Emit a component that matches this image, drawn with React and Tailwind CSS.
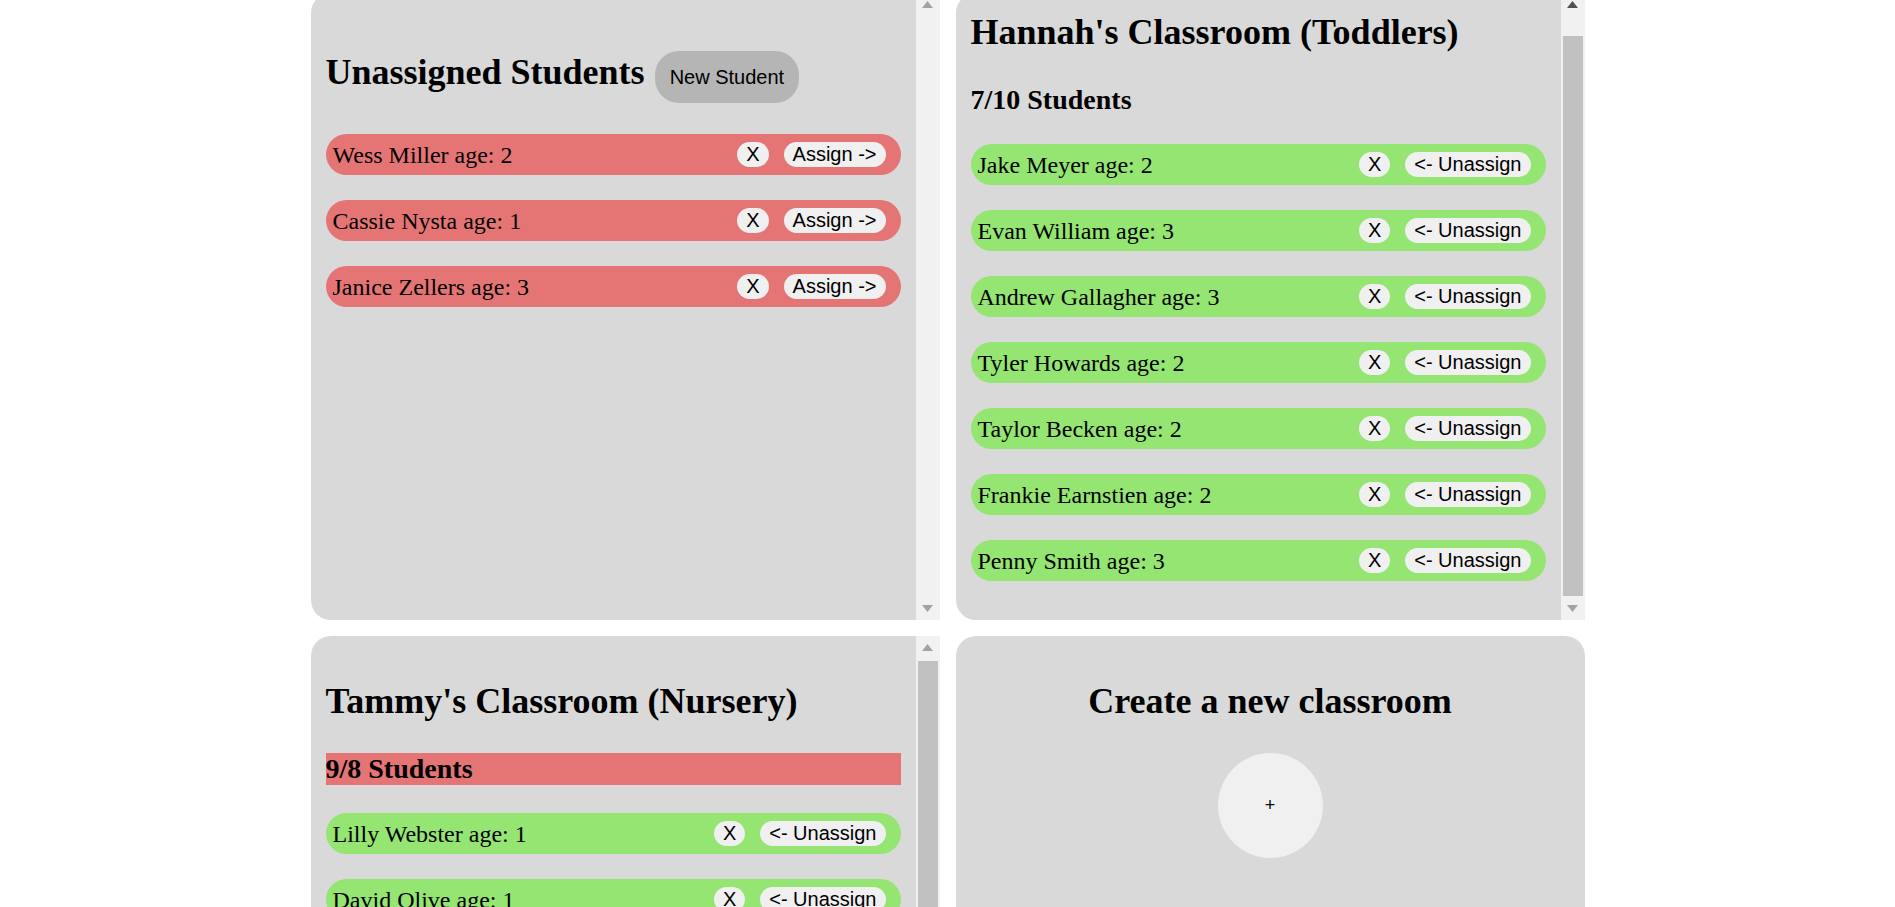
import React, { useEffect, useRef } from "react";

const unassigned = [
  { name: "Wess Miller", age: 2 },
  { name: "Cassie Nysta", age: 1 },
  { name: "Janice Zellers", age: 3 },
];

const hannah = [
  { name: "Jake Meyer", age: 2 },
  { name: "Evan William", age: 3 },
  { name: "Andrew Gallagher", age: 3 },
  { name: "Tyler Howards", age: 2 },
  { name: "Taylor Becken", age: 2 },
  { name: "Frankie Earnstien", age: 2 },
  { name: "Penny Smith", age: 3 },
];

const tammy = [
  { name: "Lilly Webster", age: 1 },
  { name: "David Olive", age: 1 },
  { name: "Mason Clark", age: 1 },
  { name: "Ella Brooks", age: 0 },
  { name: "Noah Parker", age: 1 },
  { name: "Ava Turner", age: 1 },
  { name: "Liam Foster", age: 0 },
  { name: "Grace Hill", age: 1 },
  { name: "Owen Reed", age: 1 },
];

const smallBtn =
  "rounded-full bg-[#f0f0f0] px-[9px] py-px font-['Liberation_Sans',Arial,sans-serif] text-[20px] leading-[23px] text-black";

const Arrow = ({ down, dark }) => (
  <div className="flex h-[23px] shrink-0 items-center justify-center">
    <svg width="11" height="7" viewBox="0 0 11 7">
      <path d={down ? "M0 0H11L5.5 7Z" : "M5.5 0L11 7H0Z"} fill={dark ? "#505050" : "#a3a3a3"} />
    </svg>
  </div>
);

// drawn scrollbar column at the right edge of a panel
const ScrollBar = ({ thumbClass, upDark, downDark }) => (
  <div className="flex w-[24px] shrink-0 flex-col bg-[#f1f1f1]">
    <Arrow dark={upDark} />
    <div className="flex-1 overflow-hidden px-[2px]">
      {thumbClass && <div className={"bg-[#c1c1c1] " + thumbClass} />}
    </div>
    <Arrow down dark={downDark} />
  </div>
);

const StudentRow = ({ student, assigned }) => (
  <div
    className={
      "flex h-[41px] items-center rounded-full pl-[7px] pr-[15px] " +
      (assigned ? "bg-[#95e572]" : "bg-[#e57575]")
    }
  >
    <span className="flex-1 text-[24px] leading-[28px]">
      {student.name} age: {student.age}
    </span>
    <button className={smallBtn}>X</button>
    <button className={"ml-[15px] " + smallBtn}>
      {assigned ? "<- Unassign" : "Assign ->"}
    </button>
  </div>
);

const Classroom = ({ title, count, max, students, bodyRef, bar }) => {
  const over = count > max;
  return (
    <div className="flex h-[627px] overflow-hidden rounded-l-[20px] bg-[#d9d9d9]">
      <div ref={bodyRef} className="flex-1 overflow-hidden px-[15px] pt-[45px] pb-[39px]">
        <h1 className="text-[36px] font-bold leading-[41px]">{title}</h1>
        <h2
          className={
            "mt-[31px] text-[28px] font-bold leading-[32px] " +
            (over ? "bg-[#e57575]" : "")
          }
        >
          {count}/{max} Students
        </h2>
        <div className="mt-[28px] flex flex-col gap-[25px]">
          {students.map((s) => (
            <StudentRow key={s.name} student={s} assigned />
          ))}
        </div>
      </div>
      {bar}
    </div>
  );
};

export default function App() {
  const hannahRef = useRef(null);

  useEffect(() => {
    if (hannahRef.current) {
      hannahRef.current.scrollTop = hannahRef.current.scrollHeight;
    }
  }, []);

  return (
    <div className="h-screen overflow-hidden bg-white font-['Liberation_Serif','Times_New_Roman',serif] text-black">
      <div className="mx-auto -mt-[7px] grid w-[1274px] grid-cols-2 gap-4">
        <div className="flex h-[627px] overflow-hidden rounded-l-[20px] bg-[#d9d9d9]">
          <div className="flex-1 px-[15px] pt-[58px]">
            <div className="flex items-baseline gap-[10px]">
              <h1 className="text-[36px] font-bold leading-[41px]">Unassigned Students</h1>
              <button className="h-[52px] rounded-[24px] bg-[#b5b5b5] px-[15px] font-['Liberation_Sans',Arial,sans-serif] text-[20px] leading-[23px] text-black">
                New Student
              </button>
            </div>
            <div className="mt-[31px] flex flex-col gap-[25px]">
              {unassigned.map((s) => (
                <StudentRow key={s.name} student={s} />
              ))}
            </div>
          </div>
          <ScrollBar />
        </div>

        <Classroom
          title="Hannah's Classroom (Toddlers)"
          count={7}
          max={10}
          students={hannah}
          bodyRef={hannahRef}
          bar={<ScrollBar thumbClass="mt-[20px] h-[560px]" upDark />}
        />

        <Classroom
          title="Tammy's Classroom (Nursery)"
          count={9}
          max={8}
          students={tammy}
          bar={<ScrollBar thumbClass="mt-[2px] h-[465px]" downDark />}
        />

        <div className="flex h-[627px] flex-col items-center rounded-[20px] bg-[#d9d9d9] pt-[45px]">
          <h1 className="text-[36px] font-bold leading-[41px]">Create a new classroom</h1>
          <button className="mt-[31px] flex h-[105px] w-[105px] items-center justify-center rounded-full bg-[#f0f0f0] font-['Liberation_Sans',Arial,sans-serif] text-[18px] text-black">
            +
          </button>
        </div>
      </div>
    </div>
  );
}
